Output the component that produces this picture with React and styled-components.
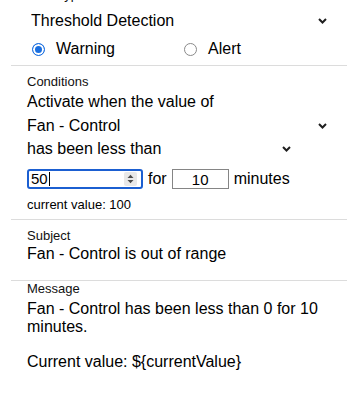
import styled, { createGlobalStyle } from 'styled-components';

const GlobalStyle = createGlobalStyle`
  body {
    margin: 0;
    background: #fff;
    color: #000;
    font-family: "Liberation Sans", Arial, Helvetica, sans-serif;
    overflow: hidden;
  }
`;

const Chevron = ({ right = 8 }) => (
  <ChevronIcon $right={right} width="9" height="6" viewBox="0 0 9 6">
    <path d="M1 1 L4.5 4.5 L8 1" fill="none" stroke="#1f1f1f" strokeWidth="2" />
  </ChevronIcon>
);

const Spinner = () => (
  <SpinIcon width="13" height="14" viewBox="0 0 13 14">
    <rect x="0" y="0" width="13" height="14" rx="2" fill="#e8e8e8" />
    <path d="M3.5 6 L6.5 2.8 L9.5 6 Z" fill="#4a4a4a" />
    <path d="M3.5 8 L6.5 11.2 L9.5 8 Z" fill="#4a4a4a" />
  </SpinIcon>
);

const App = () => {
  const message =
    'Fan - Control has been less than 0 for 10 minutes.\n\nCurrent value: ${currentValue}';

  return (
    <>
      <GlobalStyle />
      <Page>
        <Section $top="0" $bottom="7px">
          <Label>Alert Type</Label>
          <SelectWrap $width="304px" $mt="8px" $ml="4px">
            <Select defaultValue="threshold">
              <option value="threshold">Threshold Detection</option>
            </Select>
            <Chevron />
          </SelectWrap>
          <RadioGroup>
            <Option>
              <Radio type="radio" name="level" defaultChecked />
              Warning
            </Option>
            <Option>
              <Radio type="radio" name="level" />
              Alert
            </Option>
          </RadioGroup>
        </Section>

        <Section $top="8px" $bottom="7px">
          <Label>Conditions</Label>
          <Text $mt="4px">Activate when the value of</Text>
          <SelectWrap $width="308px" $mt="4px">
            <Select defaultValue="fan">
              <option value="fan">Fan - Control</option>
            </Select>
            <Chevron />
          </SelectWrap>
          <SelectWrap $width="272px" $mt="1px">
            <Select defaultValue="lt">
              <option value="lt">has been less than</option>
            </Select>
            <Chevron />
          </SelectWrap>
          <InputRow>
            <NumberBox>
              <NumberValue>50</NumberValue>
              <Caret />
              <Spinner />
            </NumberBox>
            <span>for</span>
            <SmallInput type="text" readOnly value="10" />
            <span>minutes</span>
          </InputRow>
          <Hint>current value: 100</Hint>
        </Section>

        <Section $top="8px" $bottom="17px">
          <Label>Subject</Label>
          <Text $mt="2px">Fan - Control is out of range</Text>
        </Section>

        <Section $top="0" $bottom="20px" $last>
          <Label>Message</Label>
          <MessageText>{message}</MessageText>
        </Section>
      </Page>
    </>
  );
};

export default App;

const Page = styled.div`
  margin-top: -13px;
  padding: 0 12px 0 11px;
`;

const Section = styled.section`
  padding: ${p => p.$top} 16px ${p => p.$bottom} 16px;
  border-bottom: ${p => (p.$last ? 'none' : '1px solid #dcdcdc')};
`;

const Label = styled.div`
  font-size: 13px;
  line-height: 15px;
  color: #111;
`;

const Text = styled.div`
  margin-top: ${p => p.$mt || 0};
  font-size: 16px;
  line-height: 18px;
`;

const SelectWrap = styled.div`
  position: relative;
  width: ${p => p.$width};
  margin-top: ${p => p.$mt || 0};
  margin-left: ${p => p.$ml || 0};
`;

const Select = styled.select`
  appearance: none;
  -webkit-appearance: none;
  display: block;
  width: 100%;
  height: 22px;
  margin: 0;
  padding: 0;
  border: none;
  outline: none;
  background: transparent;
  color: #000;
  font-family: inherit;
  font-size: 16px;
  line-height: 18px;
`;

const ChevronIcon = styled.svg`
  position: absolute;
  right: ${p => p.$right}px;
  top: calc(50% - 3.5px);
  pointer-events: none;
`;

const RadioGroup = styled.div`
  display: grid;
  grid-template-columns: 152px auto;
  margin-top: 8px;
  padding-left: 5px;
`;

const Option = styled.label`
  display: flex;
  align-items: center;
  gap: 11px;
  font-size: 16px;
  line-height: 18px;
`;

const Radio = styled.input`
  appearance: none;
  -webkit-appearance: none;
  width: 13px;
  height: 13px;
  margin: 0;
  border-radius: 50%;
  border: 1px solid #8a8a8a;
  background: #fff;
  box-sizing: border-box;

  &:checked {
    border-color: #1a6fe0;
    background: #1a6fe0;
    box-shadow: inset 0 0 0 2px #fff;
    border-width: 1.5px;
  }
`;

const InputRow = styled.div`
  display: flex;
  align-items: center;
  gap: 5px;
  margin-top: 9px;
  height: 20px;
  font-size: 16px;
`;

const NumberBox = styled.div`
  display: flex;
  align-items: center;
  box-sizing: border-box;
  width: 116px;
  height: 20px;
  padding: 0 4px 0 2px;
  border: 2px solid #1b5fd1;
  border-radius: 3px;
`;

const NumberValue = styled.span`
  font-size: 15px;
  line-height: 16px;
`;

const Caret = styled.span`
  width: 1px;
  height: 14px;
  margin-left: 1px;
  background: #000;
`;

const SpinIcon = styled.svg`
  margin-left: auto;
`;

const SmallInput = styled.input`
  box-sizing: border-box;
  width: 57px;
  height: 20px;
  margin: 0;
  padding: 0;
  border: 1px solid #858585;
  border-radius: 0;
  outline: none;
  text-align: center;
  color: #000;
  font-family: inherit;
  font-size: 15px;
`;

const Hint = styled.div`
  margin-top: 8px;
  font-size: 13px;
  line-height: 15px;
`;

const MessageText = styled.div`
  margin-top: 4px;
  font-size: 16px;
  line-height: 17.6px;
  white-space: pre-line;
`;
